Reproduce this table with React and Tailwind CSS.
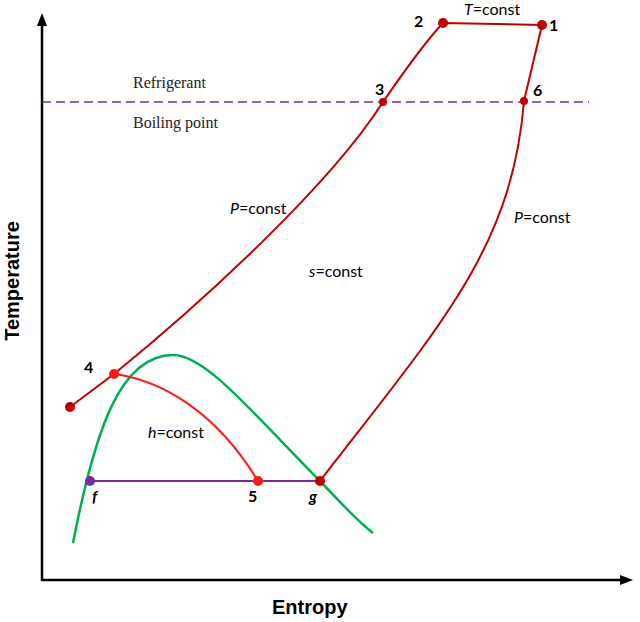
import React from "react";

const DARK = "#c00000";
const RED = "#ff1a1a";
const PURPLE = "#7030a0";
const GREEN = "#00b050";

const App = () => {
  return (
    <div className="w-[640px] h-[622px] bg-white overflow-hidden">
      <svg width="640" height="622" viewBox="0 0 640 622" className="block">
        {/* axes */}
        <line x1="42" y1="581" x2="42" y2="24" stroke="#000" strokeWidth="2.5" />
        <polygon points="42,13 37,26 47,26" fill="#000" />
        <line x1="41" y1="580" x2="622" y2="580" stroke="#000" strokeWidth="2.5" />
        <polygon points="633,580 620,575 620,585" fill="#000" />

        {/* boiling point line */}
        <line x1="42" y1="102" x2="589" y2="102" stroke={PURPLE} strokeWidth="1.5" strokeDasharray="9 5" />
        <g className="font-['Liberation_Serif',serif] text-[16px] fill-[#222]">
          <text x="133" y="88">Refrigerant</text>
          <text x="133" y="128">Boiling point</text>
        </g>

        {/* saturation dome */}
        <path d="M73,543 C95,430 120,355 173,355 C205,355 250,410 320,481 C340,502 356,520 373,533" fill="none" stroke={GREEN} strokeWidth="2.5" />

        {/* cycle */}
        <path d="M70,407 L114,374 C205,300 330,185 383,102 C405,70 425,42 443,23 L542,25 L524,101 C512,248 442,323 320,481" fill="none" stroke={DARK} strokeWidth="2" />
        <path d="M114,374 C160,380 215,410 258,481" fill="none" stroke={RED} strokeWidth="2" />
        <line x1="90" y1="481" x2="320" y2="481" stroke={PURPLE} strokeWidth="2" />

        {/* points */}
        <circle cx="443" cy="23" r="5" fill={DARK} />
        <circle cx="542" cy="25" r="5" fill={DARK} />
        <circle cx="383" cy="102" r="4" fill={DARK} />
        <circle cx="524" cy="101" r="4" fill={DARK} />
        <circle cx="70" cy="407" r="5" fill={DARK} />
        <circle cx="114" cy="374" r="5" fill={RED} />
        <circle cx="90" cy="481" r="5" fill={PURPLE} />
        <circle cx="258" cy="481" r="5" fill={RED} />
        <circle cx="320" cy="481" r="5" fill={DARK} />

        {/* point labels */}
        <g className="font-['Lato',sans-serif] text-[16px] font-bold fill-black">
          <text x="414" y="27">2</text>
          <text x="549" y="31">1</text>
          <text x="375" y="95">3</text>
          <text x="533" y="96">6</text>
          <text x="84" y="373">4</text>
          <text x="248" y="502">5</text>
          <text x="92" y="502" className="italic">f</text>
          <text x="309" y="502" className="italic">g</text>
        </g>

        {/* curve labels */}
        <g className="font-['Lato',sans-serif] text-[16px] fill-black">
          <text x="464" y="15"><tspan className="italic">T</tspan>=const</text>
          <text x="230" y="214"><tspan className="italic">P</tspan>=const</text>
          <text x="514" y="223"><tspan className="italic">P</tspan>=const</text>
          <text x="309" y="277"><tspan className="italic">s</tspan>=const</text>
          <text x="148" y="438"><tspan className="italic">h</tspan>=const</text>
        </g>

        {/* axis titles */}
        <g className="font-['Liberation_Sans',Arial,sans-serif] text-[20px] font-bold fill-black">
          <text x="272" y="614">Entropy</text>
          <text x="0" y="0" textAnchor="middle" transform="translate(19 281) rotate(-90)">Temperature</text>
        </g>
      </svg>
    </div>
  );
};

export default App;
